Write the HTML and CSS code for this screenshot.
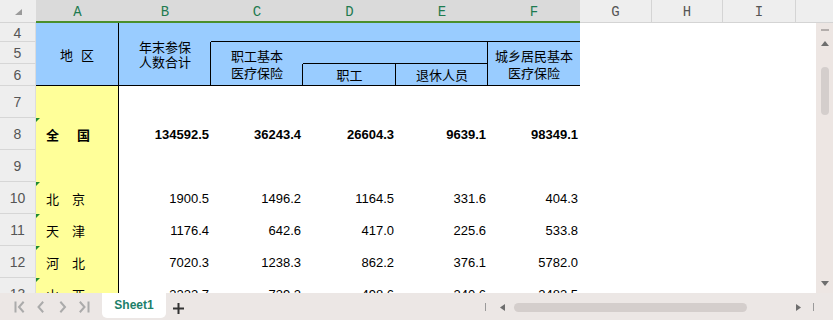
FILE: index.html
```html
<!DOCTYPE html>
<html lang="zh">
<head>
<meta charset="utf-8">
<title>Sheet1</title>
<link rel="stylesheet" href="styles.css">
</head>
<body>
<div class="app">
  <div class="colheads">
    <div class="ch corner"><svg class="corner-tri" width="36" height="21" viewBox="0 0 36 21"><polygon points="22,9 22,15 15,15" fill="#9a9a9a"/></svg></div>
    <div class="ch sel">A</div>
    <div class="ch sel">B</div>
    <div class="ch sel">C</div>
    <div class="ch sel">D</div>
    <div class="ch sel">E</div>
    <div class="ch sel">F</div>
    <div class="ch sep">G</div>
    <div class="ch sep">H</div>
    <div class="ch sep">I</div>
    <div class="ch"></div>
  </div>
  <div class="body">
    <div class="sheet">
      <div class="hdr">
        <div class="rh r1">4</div>
        <div class="rh r2">5</div>
        <div class="rh r3">6</div>
        <div class="hc hA">地 区</div>
        <div class="hc hB">年末参保<br>人数合计</div>
        <div class="hc hTop"></div>
        <div class="hc hC">职工基本<br>医疗保险</div>
        <div class="hc hDE"></div>
        <div class="hc hD">职工</div>
        <div class="hc hE">退休人员</div>
        <div class="hc hF">城乡居民基本<br>医疗保险</div>
      </div>
      <div class="row"><div class="rh">7</div><div class="cA"></div><div class="num"></div><div class="num"></div><div class="num"></div><div class="num"></div><div class="num"></div><div></div></div>
      <div class="row bold"><div class="rh">8</div><div class="cA mark wide">全　国</div><div class="num">134592.5</div><div class="num">36243.4</div><div class="num">26604.3</div><div class="num">9639.1</div><div class="num">98349.1</div><div></div></div>
      <div class="row"><div class="rh">9</div><div class="cA"></div><div class="num"></div><div class="num"></div><div class="num"></div><div class="num"></div><div class="num"></div><div></div></div>
      <div class="row"><div class="rh">10</div><div class="cA mark">北　京</div><div class="num">1900.5</div><div class="num">1496.2</div><div class="num">1164.5</div><div class="num">331.6</div><div class="num">404.3</div><div></div></div>
      <div class="row"><div class="rh">11</div><div class="cA mark">天　津</div><div class="num">1176.4</div><div class="num">642.6</div><div class="num">417.0</div><div class="num">225.6</div><div class="num">533.8</div><div></div></div>
      <div class="row"><div class="rh">12</div><div class="cA mark">河　北</div><div class="num">7020.3</div><div class="num">1238.3</div><div class="num">862.2</div><div class="num">376.1</div><div class="num">5782.0</div><div></div></div>
      <div class="row"><div class="rh">13</div><div class="cA mark">山　西</div><div class="num">3222.7</div><div class="num">739.2</div><div class="num">498.6</div><div class="num">240.6</div><div class="num">2483.5</div><div></div></div>
    </div>
    <div class="vscroll">
      <div class="vmin"></div>
      <svg class="varrow up" width="8" height="5" viewBox="0 0 8 5"><polygon points="0,5 4,0 8,5" fill="#6e6e6e"/></svg>
      <div class="vthumb"></div>
      <div class="vspace"></div>
      <svg class="varrow down" width="8" height="5" viewBox="0 0 8 5"><polygon points="0,0 8,0 4,5" fill="#6e6e6e"/></svg>
    </div>
  </div>
  <div class="bar">
    <svg class="nav" width="102" height="27" viewBox="0 0 102 27">
      <g fill="none" stroke="#ababab" stroke-width="2" stroke-linecap="square">
        <line x1="15.5" y1="9.5" x2="15.5" y2="18.5"/>
        <polyline points="23,9.5 19,14 23,18.5"/>
        <polyline points="42.5,9.5 38.5,14 42.5,18.5"/>
        <polyline points="61,9.5 65,14 61,18.5"/>
        <polyline points="80.5,9.5 84.5,14 80.5,18.5"/>
        <line x1="88.5" y1="9.5" x2="88.5" y2="18.5"/>
      </g>
    </svg>
    <div class="tab">Sheet1</div>
    <div class="add"><svg width="11" height="11" viewBox="0 0 11 11"><g stroke="#333" stroke-width="2"><line x1="0" y1="5.5" x2="11" y2="5.5"/><line x1="5.5" y1="0" x2="5.5" y2="11"/></g></svg></div>
    <div class="hs">
      <div class="hbar"></div>
      <svg class="harrow left" width="5" height="7" viewBox="0 0 5 7"><polygon points="5,0 5,7 0,3.5" fill="#6e6e6e"/></svg>
      <div class="hthumb"></div>
      <svg class="harrow right" width="5" height="7" viewBox="0 0 5 7"><polygon points="0,0 0,7 5,3.5" fill="#6e6e6e"/></svg>
      <div class="hbar end"></div>
    </div>
  </div>
</div>
</body>
</html>
```

FILE: styles.css
```css
* { box-sizing: border-box; margin: 0; padding: 0; }
html, body { width: 833px; height: 320px; overflow: hidden; background: #fff; }
body { font-family: "Liberation Sans", "Noto Sans CJK SC", sans-serif; color: #000; }

.app { display: flex; flex-direction: column; width: 833px; height: 320px; }

/* column headers */
.colheads {
  display: grid;
  grid-template-columns: 36px 83px 92px 92px 93px 92px 92px 72px 71px 73px 1fr;
  height: 23px;
  flex: none;
}
.ch {
  background: #eeeeee;
  border-bottom: 1px solid #d4d4d4;
  font-family: "Liberation Mono", monospace;
  font-size: 14px;
  color: #555;
  display: flex;
  align-items: center;
  justify-content: center;
  padding-top: 1px;
}
.ch.sep { border-right: 1px solid #d4d4d4; }
.ch.sel { background: #dadada; border-bottom: 2px solid #4b8f2c; color: #1e7b50; padding-top: 2px; }
.corner { padding: 0; align-items: flex-start; justify-content: flex-start; }
.corner-tri { display: block; }

/* body */
.body { display: flex; flex: 1; min-height: 0; }
.sheet { width: 816px; flex: none; overflow: hidden; display: flex; flex-direction: column; }

.hdr {
  display: grid;
  grid-template-columns: 36px 83px 92px 92px 93px 92px 92px 1fr;
  grid-template-rows: 19px 22px 22px;
  flex: none;
}
.row {
  display: grid;
  grid-template-columns: 36px 83px 92px 92px 93px 92px 92px 1fr;
  height: 32px;
  flex: none;
}

.rh {
  background: #eeeeee;
  border-bottom: 1px solid #d6d6d6;
  border-right: 1px solid #dcdcdc;
  font-family: "Liberation Sans", sans-serif;
  font-size: 14px;
  color: #555;
  display: flex;
  align-items: center;
  justify-content: center;
  padding-top: 1px;
}
.rh.r1 { grid-column: 1; grid-row: 1; }
.rh.r2 { grid-column: 1; grid-row: 2; }
.rh.r3 { grid-column: 1; grid-row: 3; }

.hc {
  background: #99ccff;
  font-family: "Noto Sans CJK SC", sans-serif;
  font-size: 13px;
  line-height: 17px;
  color: #000;
  display: flex;
  align-items: center;
  justify-content: center;
  text-align: center;
}
.hA { grid-column: 2; grid-row: 1 / 4; border-right: 1px solid #000; border-bottom: 1px solid #000; word-spacing: 5px; }
.hB { grid-column: 3; grid-row: 1 / 4; border-bottom: 1px solid #000; line-height: 15px; }
.hTop { grid-column: 4 / 8; grid-row: 1; border-bottom: 1px solid #000; }
.hC { grid-column: 4; grid-row: 2 / 4; border-left: 1px solid #000; margin-left: -1px; border-bottom: 1px solid #000; padding-top: 1px; }
.hDE { grid-column: 5 / 7; grid-row: 2; border-bottom: 1px solid #000; }
.hD { grid-column: 5; grid-row: 3; border-left: 1px solid #000; margin-left: -1px; border-bottom: 1px solid #000; }
.hE { grid-column: 6; grid-row: 3; border-left: 1px solid #000; margin-left: -1px; border-bottom: 1px solid #000; }
.hF { grid-column: 7; grid-row: 2 / 4; border-left: 1px solid #000; margin-left: -1px; border-bottom: 1px solid #000; padding-top: 1px; }

.cA {
  background: #ffff99;
  border-right: 1px solid #000;
  font-family: "Noto Sans CJK SC", sans-serif;
  font-size: 13px;
  padding-left: 10px;
  display: flex;
  align-items: center;
  position: relative;
}
.cA.mark::before {
  content: "";
  position: absolute;
  left: 0;
  top: 0;
  border-top: 4px solid #1f8a32;
  border-right: 4px solid transparent;
}
.cA.wide { letter-spacing: 2.5px; }

.num {
  font-family: "Liberation Sans", sans-serif;
  font-size: 13px;
  display: flex;
  align-items: center;
  justify-content: flex-end;
  padding-right: 2px;
}
.row.bold .num, .row.bold .cA { font-weight: bold; }

/* vertical scrollbar */
.vscroll {
  width: 17px;
  flex: none;
  background: #ede6e3;
  display: flex;
  flex-direction: column;
  align-items: flex-start;
  padding: 6px 0 7px 5px;
}
.vmin { width: 8px; height: 2px; background: #b3adab; flex: none; }
.varrow { display: block; flex: none; }
.varrow.up { margin-top: 10px; }
.vthumb { width: 8px; height: 48px; border-radius: 4px; background: #d4cecc; margin-top: 21px; flex: none; }
.vspace { flex: 1; }

/* bottom bar */
.bar {
  height: 27px;
  flex: none;
  background: #ece7e5;
  display: flex;
  align-items: flex-start;
}
.nav { display: block; flex: none; }
.tab {
  width: 64px;
  height: 25px;
  background: #fff;
  border-radius: 0 0 5px 5px;
  font-family: "Liberation Sans", sans-serif;
  font-weight: bold;
  font-size: 12px;
  color: #1b806a;
  display: flex;
  align-items: center;
  justify-content: center;
  padding-bottom: 1px;
  flex: none;
}
.add {
  width: 24px;
  height: 27px;
  display: flex;
  align-items: center;
  justify-content: center;
  padding-top: 4px;
  flex: none;
}
.add svg { display: block; }
.hs {
  margin-left: auto;
  width: 348px;
  height: 27px;
  display: flex;
  align-items: center;
  padding-top: 1px;
  flex: none;
}
.hbar { width: 1px; height: 8px; background: #9a9a9a; flex: none; }
.harrow { display: block; flex: none; }
.harrow.left { margin-left: 14px; }
.hthumb { width: 233px; height: 9px; border-radius: 5px; background: #d4cecc; margin-left: 9px; flex: none; }
.harrow.right { margin-left: 49px; }
.hbar.end { margin-left: 12px; }
```
